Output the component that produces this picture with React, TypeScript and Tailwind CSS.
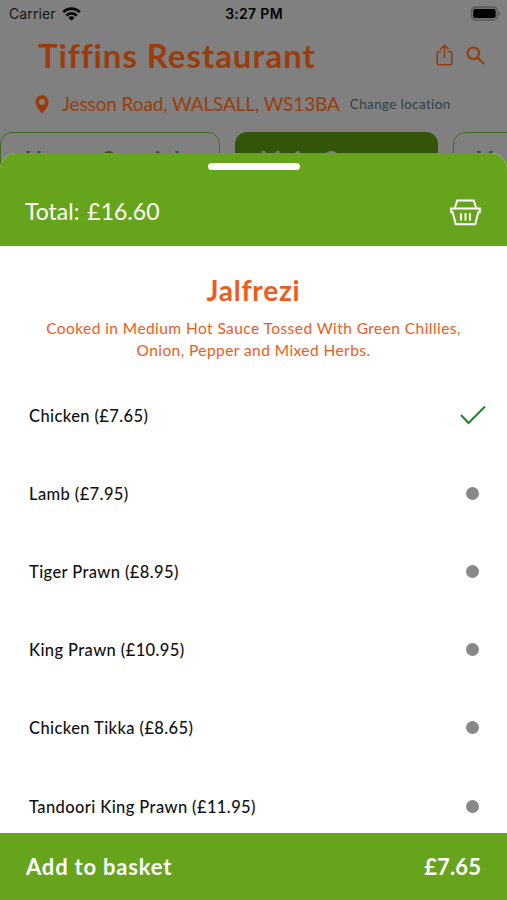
import React from 'react';

const options = [
  { name: 'Chicken (£7.65)', selected: true },
  { name: 'Lamb (£7.95)', selected: false },
  { name: 'Tiger Prawn (£8.95)', selected: false },
  { name: 'King Prawn (£10.95)', selected: false },
  { name: 'Chicken Tikka (£8.65)', selected: false },
  { name: 'Tandoori King Prawn (£11.95)', selected: false },
];

function StatusBar() {
  return (
    <div className="grid h-[27px] grid-cols-3 items-center pl-[9px] pr-[6px] font-['Inter','Liberation_Sans',sans-serif] text-black">
      <div className="flex items-center gap-[6px] text-[14px]">
        <span className="tracking-[0.1px] text-[#161616]">Carrier</span>
        <svg width="19" height="14" viewBox="0 0 19 14" fill="none" stroke="#080808" strokeWidth="2.7">
          <path d="M1.2 5.1a11.8 11.8 0 0 1 16.6 0" />
          <path d="M4.2 8.500a7.500 7.500 0 0 1 10.600 0" />
          <path d="M9.500 13.800 6.300 10.600a4.600 4.600 0 0 1 6.400 0Z" fill="#080808" stroke="none" />
        </svg>
      </div>
      <div className="whitespace-nowrap pr-[2px] text-center text-[14px] font-semibold tracking-[0.3px]">3:27 PM</div>
      <div className="flex justify-end">
        <svg width="31" height="15" viewBox="0 0 31 15">
          <rect x="1.500" y="1" width="26" height="13" rx="4" fill="#737373" stroke="#5c5c5c" strokeWidth="1.300" />
          <rect x="3.300" y="2.900" width="22.300" height="9.200" rx="2" fill="#000" />
          <path d="M28.900 5.200v4.600c1.800-.8 1.800-3.800 0-4.600Z" fill="#585858" />
        </svg>
      </div>
    </div>
  );
}

function RestaurantHeader() {
  return (
    <div className="text-[#9b3c0c]">
      <div className="flex h-[55px] items-center pl-[38px] pr-[22px] pt-px">
        <h1 className="flex-1 whitespace-nowrap text-[33px] font-bold leading-none tracking-[0.95px]">Tiffins Restaurant</h1>
        <svg className="mr-[13px]" width="17" height="22" viewBox="0 0 17 22" fill="none" stroke="currentColor" strokeWidth="1.600">
          <path d="M5.500 7.500H3A1.800 1.800 0 0 0 1.200 9.300v9.700A1.800 1.800 0 0 0 3 20.800h11a1.800 1.800 0 0 0 1.800-1.800V9.300A1.800 1.800 0 0 0 14 7.500h-2.500M8.500 14V1.500M4.500 5.300l4-4 4 4" />
        </svg>
        <svg width="19" height="19" viewBox="0 0 19 19" fill="none" stroke="currentColor" strokeWidth="2.200">
          <circle cx="7.300" cy="7.300" r="5.800" />
          <path d="m11.600 11.600 6.200 6.200" />
        </svg>
      </div>
      <div className="flex h-[45px] items-center pl-[35px]">
        <svg width="14" height="19" viewBox="0 0 14 19" fill="currentColor">
          <path fillRule="evenodd" d="M7 .3A6.600 6.600 0 0 0 .4 6.900C.4 11.700 7 18.500 7 18.500s6.600-6.800 6.600-11.600A6.600 6.600 0 0 0 7 .3Zm0 3.700a3 3 0 1 1 0 6 3 3 0 0 1 0-6Z" />
        </svg>
        <span className="ml-[13px] whitespace-nowrap text-[19px] tracking-[-0.12px]">Jesson Road, WALSALL, WS13BA</span>
        <span className="ml-[10px] whitespace-nowrap text-[13.500px] tracking-[0.350px] text-[#304044]">Change location</span>
      </div>
    </div>
  );
}

function CategoryTabs() {
  return (
    <div className="mt-[5px] flex w-[640px] gap-[15px] text-[22.500px] font-bold tracking-[1.200px] text-[#315409]">
      <div className="h-[46px] w-[220px] rounded-[12px] border-[1.500px] border-[#426b20] pl-[24px] leading-[53px]">House Specials</div>
      <div className="h-[46px] w-[203px] rounded-[12px] bg-[#32550a] pl-[25px] leading-[55px] text-[#808080]">Main Courses</div>
      <div className="h-[46px] w-[180px] rounded-[12px] border-[1.500px] border-[#426b20] pl-[23px] leading-[53px]">V</div>
    </div>
  );
}

function BasketIcon() {
  return (
    <svg width="31" height="27" viewBox="0 0 31 27" fill="none" stroke="#fff" strokeWidth="2">
      <path d="M4.800 9 7.300 1.500h16.400L26.200 9" />
      <path d="M1.200 9.500h28.600v3.700h-1.500L25.300 25.300H5.700L2.700 13.200H1.200Z" />
      <path d="M11 14v7.500M15.500 14v7.500M20 14v7.500" strokeWidth="2" />
    </svg>
  );
}

function ItemSheet() {
  return (
    <section className="absolute inset-x-0 bottom-0 top-[153px] flex flex-col overflow-hidden rounded-t-[16px] bg-white">
      <header className="flex h-[93px] flex-col bg-[#66a51b] text-white">
        <div className="mt-[10px] h-[7px] w-[92px] self-center rounded-full bg-white" />
        <div className="mt-[23px] flex h-[38px] items-center justify-between pl-[25px] pr-[26px]">
          <span className="pb-[2px] text-[23px] tracking-[0px] [word-spacing:2px]">Total: £16.60</span>
          <BasketIcon />
        </div>
      </header>
      <main className="flex-1 overflow-hidden">
        <div className="pt-[26px] text-center text-[#ef5b1b]">
          <h2 className="text-[28px] font-bold leading-[36px] tracking-[0.8px]">Jalfrezi</h2>
          <p className="mt-[9px] text-[15.500px] leading-[22px] tracking-[0.430px]">
            Cooked in Medium Hot Sauce Tossed With Green Chillies,
            <br />
            Onion, Pepper and Mixed Herbs.
          </p>
        </div>
        <ul className="mt-[15px]">
          {options.map((option) => (
            <li key={option.name} className="flex h-[78.200px] items-center justify-between pl-[29px] text-[16.500px] font-medium text-[#111]">
              <span className="pt-[2px] tracking-[0.400px]">{option.name}</span>
              {option.selected ? (
                <svg className="mr-[21px]" width="26" height="20" viewBox="0 0 26 20" fill="none" stroke="#1d852c" strokeWidth="2">
                  <path d="m1 10 7.500 8L25 1.500" />
                </svg>
              ) : (
                <span className="mr-[28px] size-[13px] rounded-full bg-[#888]" />
              )}
            </li>
          ))}
        </ul>
      </main>
      <footer className="flex h-[67px] items-center justify-between bg-[#66a51b] pb-px pl-[26px] pr-[26px] text-[22px] font-bold text-white">
        <span className="tracking-[0.800px]">Add to basket</span>
        <span className="tracking-[0.100px]">£7.65</span>
      </footer>
    </section>
  );
}

export default function App() {
  return (
    <div className="relative h-[900px] w-[507px] overflow-hidden bg-[#808080] font-['Lato','Liberation_Sans',sans-serif]">
      <StatusBar />
      <RestaurantHeader />
      <CategoryTabs />
      <ItemSheet />
    </div>
  );
}
